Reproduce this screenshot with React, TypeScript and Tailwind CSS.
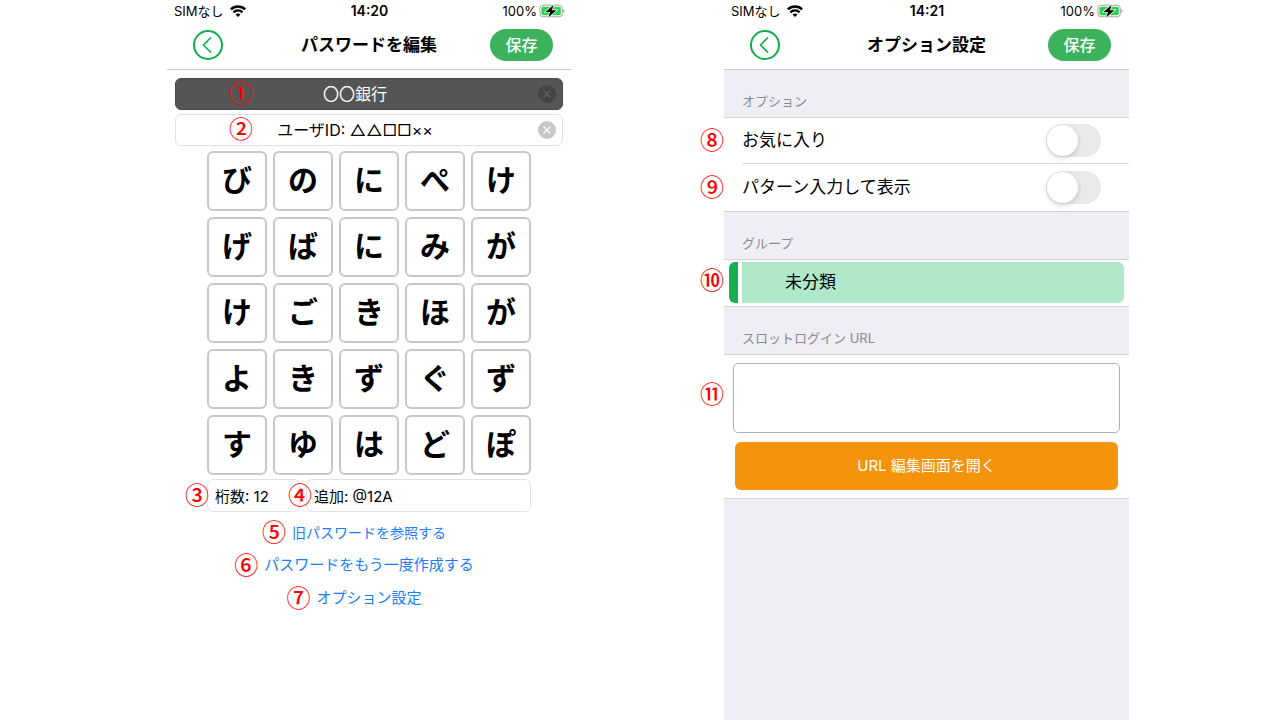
import React, { useState } from 'react';
import { ChevronLeft, X } from 'lucide-react';
import { clsx } from 'clsx';

// ---------------------------------------------------------------------------
// Data
// ---------------------------------------------------------------------------

const KEY_ROWS = ['びのにぺけ', 'げばにみが', 'けごきほが', 'よきずぐず', 'すゆはどぽ'];

// ---------------------------------------------------------------------------
// Callout number
// ---------------------------------------------------------------------------

function Marker({ label, className }: { label: string; className?: string }) {
  return (
    <span
      className={clsx(
        'pointer-events-none absolute z-10 w-6 pb-1 text-center text-2xl leading-6 font-medium text-[#ff0000]',
        "font-['Noto_Sans_CJK_JP',sans-serif]",
        className,
      )}
    >
      {label}
    </span>
  );
}

// ---------------------------------------------------------------------------
// Status bar
// ---------------------------------------------------------------------------

function WifiIcon() {
  return (
    <svg viewBox="0 0 16 12" className="h-3 w-4" fill="none" stroke="#000" strokeWidth="2.4">
      <path d="M0.9 4.4 A10 10 0 0 1 15.1 4.4" />
      <path d="M3.4 7.3 A6.5 6.5 0 0 1 12.6 7.3" />
      <path d="M8 12 L5.5 9.6 A3.6 3.6 0 0 1 10.5 9.6 Z" fill="#000" stroke="none" />
    </svg>
  );
}

function BatteryIcon() {
  return (
    <svg viewBox="0 0 26 14" className="h-3.5 w-[26px]">
      <rect x="0.9" y="1.2" width="22.4" height="11.6" rx="3.2" fill="#fff" stroke="#a3a3a3" />
      <rect x="2.4" y="2.7" width="19.4" height="8.6" rx="1.8" fill="#30cf56" />
      <path d="M24.4 5 Q25.6 5.6 25.6 7 Q25.6 8.4 24.4 9 Z" fill="#a3a3a3" />
      <path
        d="M14.6 0.8 L6.6 7.9 H11 L9.2 13.4 L17.4 6.2 H13 Z"
        fill="#000"
        stroke="#fff"
        strokeWidth="1.4"
        paintOrder="stroke"
      />
    </svg>
  );
}

function StatusBar({ time }: { time: string }) {
  return (
    <div className="grid h-[22px] grid-cols-3 items-center pr-1.5 pl-[7px] text-[13px] leading-4">
      <div className="flex items-center gap-1.5">
        <span>SIMなし</span>
        <WifiIcon />
      </div>
      <span className="text-center text-sm leading-4 font-semibold">{time}</span>
      <div className="flex items-center justify-end gap-0.5">
        <span>100%</span>
        <BatteryIcon />
      </div>
    </div>
  );
}

// ---------------------------------------------------------------------------
// Navigation bar
// ---------------------------------------------------------------------------

function NavBar({ title }: { title: string }) {
  return (
    <header className="grid h-12 grid-cols-[1fr_auto_1fr] items-center border-b border-[#c8c8ca] px-[18px] pb-0.5">
      <button
        type="button"
        aria-label="戻る"
        className="ml-2 flex size-[30px] items-center justify-center rounded-full border-2 border-[#0fae4b] text-[#0fae4b]"
      >
        <ChevronLeft className="-ml-0.5 size-7 shrink-0" strokeWidth={1.5} />
      </button>
      <h1 className="text-[17px] leading-6 font-bold">{title}</h1>
      <button
        type="button"
        className="h-8 w-[63px] justify-self-end rounded-full bg-[#3bb25b] text-base font-medium text-white"
      >
        保存
      </button>
    </header>
  );
}

function Phone({ time, title, className, children }: {
  time: string;
  title: string;
  className?: string;
  children: React.ReactNode;
}) {
  return (
    <section className={clsx('flex min-h-screen flex-1 flex-col', className)}>
      <div className="bg-white">
        <StatusBar time={time} />
        <NavBar title={title} />
      </div>
      {children}
    </section>
  );
}

// ---------------------------------------------------------------------------
// Password editor
// ---------------------------------------------------------------------------

interface ClearableFieldProps {
  label: string;
  initial: string;
  marker: string;
  dark?: boolean;
}

function ClearableField({ label, initial, marker, dark }: ClearableFieldProps) {
  const [value, setValue] = useState(initial);

  return (
    <div
      className={clsx(
        'relative flex h-8 items-center rounded-md border pr-1.5',
        dark ? 'border-[#4a4a4a] bg-[#555555] text-white' : 'border-[#e2e2e2] bg-white',
      )}
    >
      <Marker label={marker} className="left-[53px]" />
      <input
        aria-label={label}
        value={value}
        onChange={(e) => setValue(e.target.value)}
        className="min-w-0 flex-1 bg-transparent pr-1 text-center text-base outline-none"
      />
      <button
        type="button"
        aria-label="クリア"
        onClick={() => setValue('')}
        className={clsx(
          'flex size-[18px] items-center justify-center rounded-full',
          dark ? 'bg-[#444444] text-[#606060]' : 'bg-[#c7c7c7] text-white',
        )}
      >
        <X className="size-3" strokeWidth={2.5} />
      </button>
    </div>
  );
}

function ActionLink({ marker, className, children }: {
  marker: string;
  className?: string;
  children: React.ReactNode;
}) {
  return (
    <button
      type="button"
      className={clsx('relative flex h-[33px] items-center text-[#1a7df5]', className)}
    >
      <Marker label={marker} className="right-full mr-1.5" />
      {children}
    </button>
  );
}

function PasswordEditor() {
  return (
    <Phone time="14:20" title="パスワードを編集" className="max-w-[404px]">
      <div className="flex flex-col gap-1 px-2 pt-2">
        <ClearableField label="名称" initial="〇〇銀行" marker="①" dark />
        <ClearableField label="ユーザID" initial="ユーザID: △△□□××" marker="②" />
      </div>

      <div className="mt-[5px] flex flex-col items-center">
        <div className="grid grid-cols-5 gap-1.5">
          {KEY_ROWS.flatMap((row, r) =>
            [...row].map((kana, c) => (
              <button
                key={`${r}-${c}`}
                type="button"
                className="flex size-[60px] items-center justify-center rounded-md border-2 border-[#c8c8c8] bg-white pb-0.5 text-[30px] leading-none font-bold"
              >
                {kana}
              </button>
            )),
          )}
        </div>

        <div className="mt-1 flex w-[324px] gap-1.5 text-[15px]">
          <div className="relative flex w-[93px] items-center">
            <Marker label="③" className="right-full -mr-0.5" />
            <input
              aria-label="桁数"
              defaultValue="桁数: 12"
              className="h-[33px] w-full rounded-md border border-[#e2e2e2] px-[7px] outline-none"
            />
          </div>
          <div className="relative flex flex-1 items-center">
            <Marker label="④" className="right-full -mr-1.5" />
            <input
              aria-label="追加"
              defaultValue="追加: @12A"
              className="h-[33px] w-full rounded-md border border-[#e2e2e2] px-[7px] outline-none"
            />
          </div>
        </div>

        <div className="mt-1 flex flex-col items-center">
          <ActionLink marker="⑤" className="text-sm">旧パスワードを参照する</ActionLink>
          <ActionLink marker="⑥" className="text-[15px]">パスワードをもう一度作成する</ActionLink>
          <ActionLink marker="⑦" className="text-[15px]">オプション設定</ActionLink>
        </div>
      </div>
    </Phone>
  );
}

// ---------------------------------------------------------------------------
// Options
// ---------------------------------------------------------------------------

function SectionTitle({ children }: { children: React.ReactNode }) {
  return (
    <h2 className="flex h-12 items-end border-b border-[#d3d3d7] px-[18px] pb-1.5 text-[13px] leading-5 text-[#8a8a8e]">
      {children}
    </h2>
  );
}

function ToggleRow({ marker, label, last }: { marker: string; label: string; last?: boolean }) {
  return (
    <label
      className={clsx(
        'relative flex items-center bg-white pl-[18px]',
        last && 'border-b border-[#d3d3d7]',
      )}
    >
      <Marker label={marker} className="right-full" />
      <span
        className={clsx(
          'flex flex-1 items-center justify-between pr-7 text-[17px]',
          last ? 'h-[47px]' : 'h-[46px] border-b border-[#dcdcde]',
        )}
      >
        {label}
        <input type="checkbox" role="switch" className="peer sr-only" />
        <span className="flex h-[33px] w-[55px] items-center rounded-full bg-[#e9e9ea] px-px peer-checked:justify-end peer-checked:bg-[#34c759]">
          <span className="size-[31px] rounded-full bg-white shadow-[0_2px_5px_rgba(0,0,0,0.18)]" />
        </span>
      </span>
    </label>
  );
}

function OptionsScreen() {
  return (
    <Phone time="14:21" title="オプション設定" className="max-w-[405px] bg-[#efeef4]">
      <SectionTitle>オプション</SectionTitle>
      <ToggleRow marker="⑧" label="お気に入り" />
      <ToggleRow marker="⑨" label="パターン入力して表示" last />

      <SectionTitle>グループ</SectionTitle>
      <div className="relative flex items-center border-b border-[#d3d3d7] bg-white">
        <Marker label="⑩" className="right-full mb-1" />
        <button type="button" className="flex flex-1 gap-1 pt-0.5 pr-[5px] pb-[3px] pl-[5px] text-left text-[17px]">
          <span className="h-[41px] w-[9px] rounded-l-md bg-[#17b04f]" />
          <span className="flex h-[41px] flex-1 items-center rounded-r-md bg-[#b0e9ca] pl-[43px]">
            未分類
          </span>
        </button>
      </div>

      <SectionTitle>スロットログイン URL</SectionTitle>
      <div className="flex flex-col border-b border-[#d3d3d7] bg-white px-[9px] py-2">
        <div className="relative flex items-center">
          <Marker label="⑪" className="right-full mr-[9px] mb-1.5" />
          <textarea
            aria-label="スロットログイン URL"
            className="h-[70px] w-full resize-none rounded-[5px] border border-[#b0b0b0] bg-white p-2 text-[15px] outline-none"
          />
        </div>
        <button
          type="button"
          className="mx-0.5 mt-[9px] h-12 rounded-md bg-[#f4940d] text-[15px] text-white"
        >
          URL 編集画面を開く
        </button>
      </div>
    </Phone>
  );
}

export default function App() {
  return (
    <main className="flex min-h-screen justify-center gap-[153px] bg-white pl-4 font-['Inter','Noto_Sans_CJK_JP',sans-serif] text-black">
      <PasswordEditor />
      <OptionsScreen />
    </main>
  );
}
